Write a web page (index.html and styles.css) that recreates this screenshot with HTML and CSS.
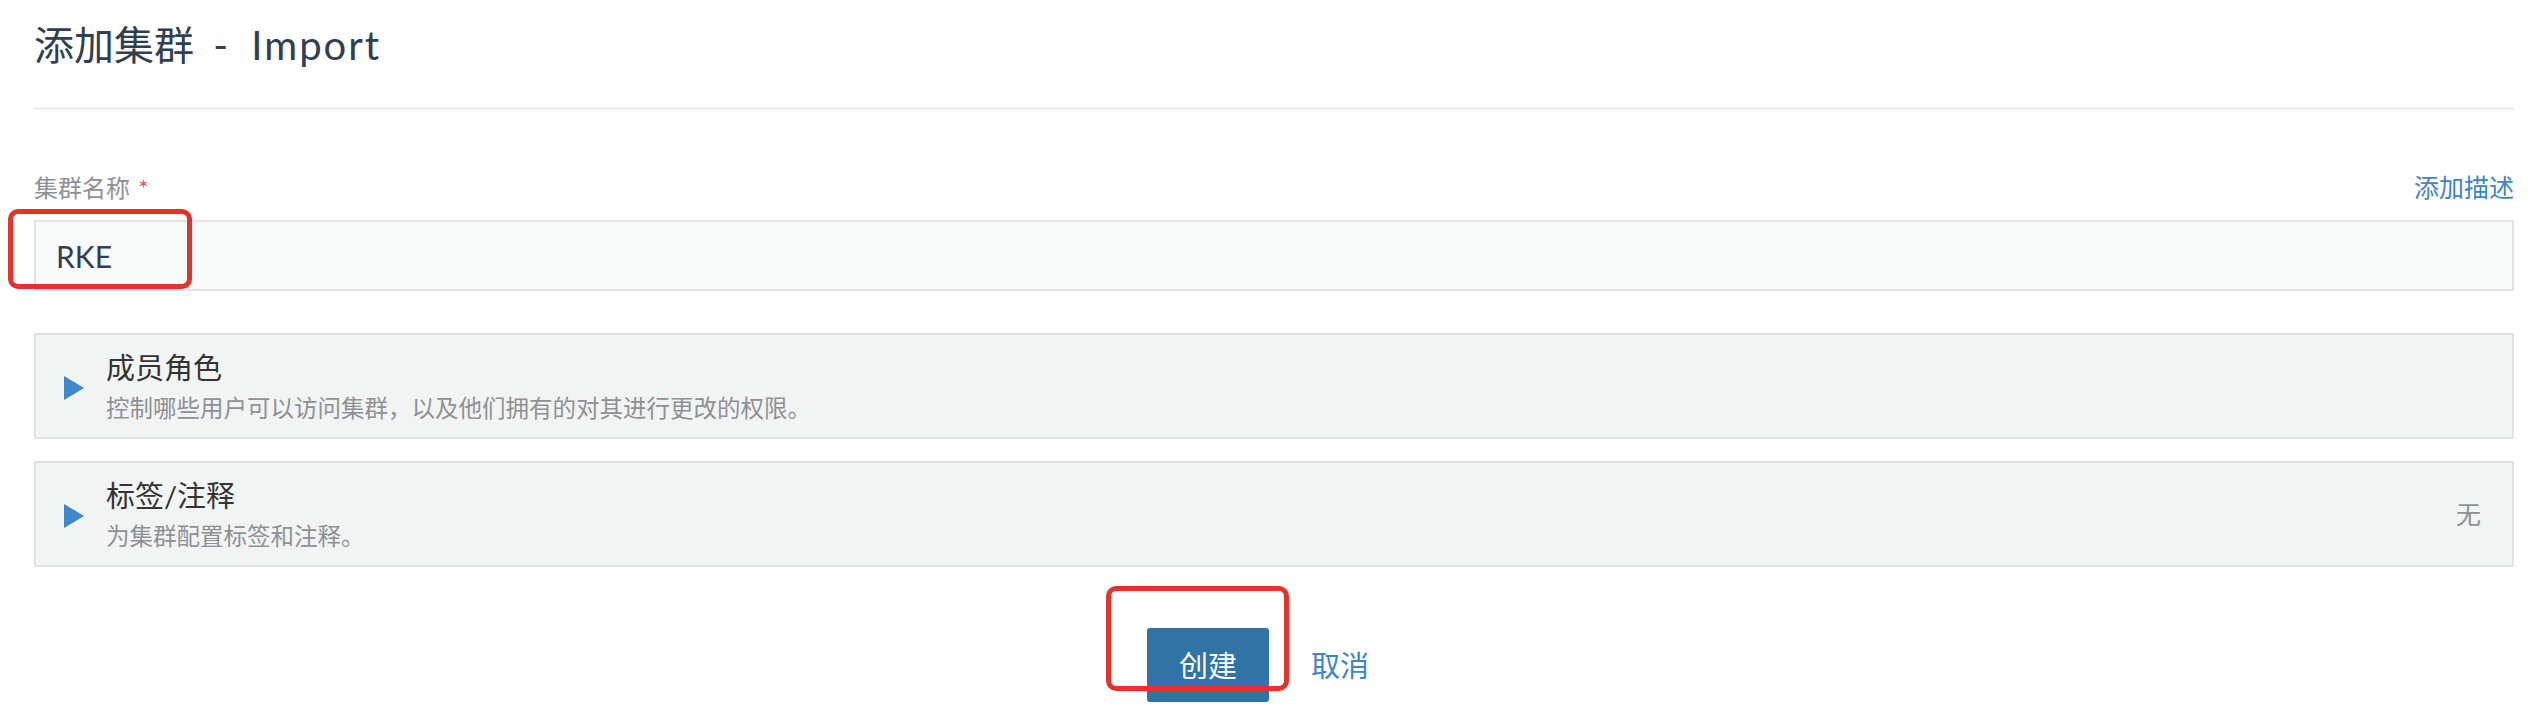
FILE: index.html
```html
<!DOCTYPE html>
<html lang="zh-CN">
<head>
<meta charset="utf-8">
<title>添加集群 - Import</title>
<link rel="stylesheet" href="styles.css">
</head>
<body>
<main class="page">
  <header class="page-header">
    <h1 class="page-title">添加集群 <span class="title-en">- Import</span></h1>
  </header>

  <section class="field">
    <div class="field-head">
      <label class="field-label">集群名称 <span class="req">*</span></label>
      <a class="link-action">添加描述</a>
    </div>
    <div class="text-input">RKE</div>
  </section>

  <section class="accordion first">
    <span class="caret"></span>
    <div class="acc-body">
      <div class="acc-title">成员角色</div>
      <div class="acc-desc">控制哪些用户可以访问集群，以及他们拥有的对其进行更改的权限。</div>
    </div>
  </section>

  <section class="accordion">
    <span class="caret"></span>
    <div class="acc-body">
      <div class="acc-title">标签/注释</div>
      <div class="acc-desc">为集群配置标签和注释。</div>
    </div>
    <span class="acc-status">无</span>
  </section>

  <footer class="actions">
    <button class="btn btn-primary">创建</button>
    <button class="btn btn-link">取消</button>
  </footer>

  <div class="mark mark-input"></div>
  <div class="mark mark-create"></div>
</main>
</body>
</html>
```

FILE: styles.css
```css
* { box-sizing: border-box; }

html, body {
  margin: 0;
  padding: 0;
  background: #ffffff;
}

body {
  font-family: Lato, "Noto Sans CJK SC", sans-serif;
  color: #333333;
}

.page {
  position: relative;
  width: 2536px;
  height: 714px;
  padding: 0 22px 0 34px;
}

.page-header {
  padding-top: 25px;
  padding-bottom: 42px;
  border-bottom: 3px solid #eceef0;
}

.page-title {
  margin: 0;
  font-size: 40px;
  line-height: 40px;
  font-weight: 400;
  color: #2f3e50;
  word-spacing: 9px;
}

.title-en {
  letter-spacing: 2px;
}

.field {
  margin-top: 65px;
}

.field-head {
  display: flex;
  justify-content: space-between;
  align-items: flex-start;
  height: 25px;
}

.field-label {
  font-size: 24px;
  line-height: 25px;
  color: #8c9196;
}

.req {
  color: #e0504c;
  margin-left: 2px;
}

.link-action {
  font-size: 25px;
  line-height: 25px;
  color: #3d85c6;
  cursor: pointer;
}

.text-input {
  margin-top: 20px;
  height: 71px;
  display: flex;
  align-items: center;
  padding-left: 20px;
  background: #f9fafa;
  border: 2px solid #dfe3e6;
  font-size: 30px;
  line-height: 30px;
  color: #2f3e50;
}

.accordion {
  display: flex;
  align-items: center;
  height: 106px;
  margin-top: 22px;
  padding: 0 31px 0 28px;
  background: #f2f4f4;
  border: 2px solid #dde2e5;
}

.accordion.first {
  margin-top: 42px;
}

.caret {
  width: 0;
  height: 0;
  border-top: 12px solid transparent;
  border-bottom: 12px solid transparent;
  border-left: 20px solid #3d87cc;
  margin-top: 4px;
  flex-shrink: 0;
}

.acc-body {
  flex: 1;
  margin-left: 22px;
  display: flex;
  flex-direction: column;
  gap: 14px;
}

.acc-title {
  font-size: 29px;
  line-height: 29px;
  color: #333333;
}

.acc-desc {
  font-size: 23.5px;
  line-height: 24px;
  color: #8d9196;
}

.acc-status {
  font-size: 25px;
  line-height: 25px;
  color: #8a9197;
}

.actions {
  margin-top: 61px;
  display: flex;
  justify-content: center;
  gap: 10px;
}

.btn {
  height: 74px;
  padding: 0 32px;
  border: 0;
  border-radius: 3px;
  font-family: Lato, "Noto Sans CJK SC", sans-serif;
  font-size: 29px;
  line-height: 29px;
  cursor: pointer;
}

.btn-primary {
  background: #2f74a4;
  color: #ffffff;
}

.btn-link {
  background: transparent;
  color: #3d85c6;
}

.mark {
  position: absolute;
  border: 5px solid #e5332a;
  border-radius: 10px;
  pointer-events: none;
}

.mark-input {
  left: 8px;
  top: 209px;
  width: 184px;
  height: 80px;
}

.mark-create {
  left: 1106px;
  top: 586px;
  width: 183px;
  height: 105px;
}
```
